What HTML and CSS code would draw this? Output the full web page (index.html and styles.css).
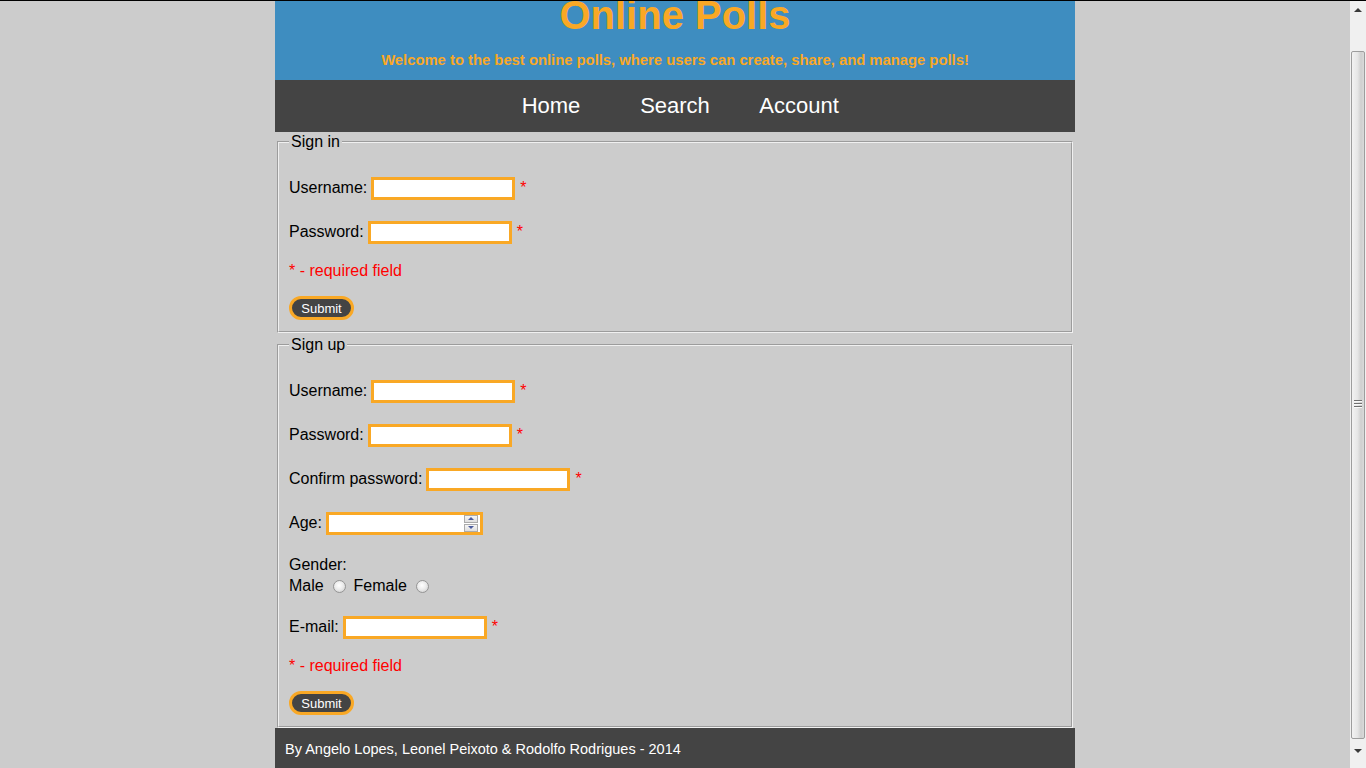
FILE: index.html
```html
<!DOCTYPE html>
<html lang="en">
<head>
<meta charset="utf-8">
<title>Online Polls</title>
<link rel="stylesheet" href="styles.css">
</head>
<body>
<div class="topline"></div>
<div class="viewport">
  <div class="page">
    <div class="wrap">
      <header class="header">
        <h1 class="title">Online Polls</h1>
        <p class="subtitle">Welcome to the best online polls, where users can create, share, and manage polls!</p>
      </header>
      <nav class="nav">
        <ul class="menu">
          <li><a href="#">Home</a></li>
          <li><a href="#">Search</a></li>
          <li><a href="#">Account</a></li>
        </ul>
      </nav>
      <main class="main">
        <form class="form">
          <fieldset class="box box-first">
            <legend>Sign in</legend>
            <div class="row"><label>Username:</label><input class="field" type="text"><span class="star">*</span></div>
            <div class="row"><label>Password:</label><input class="field" type="password"><span class="star">*</span></div>
            <p class="note">* - required field</p>
            <div class="actions"><button class="submit" type="button">Submit</button></div>
          </fieldset>
        </form>
        <form class="form">
          <fieldset class="box box-second">
            <legend>Sign up</legend>
            <div class="row"><label>Username:</label><input class="field" type="text"><span class="star">*</span></div>
            <div class="row"><label>Password:</label><input class="field" type="password"><span class="star">*</span></div>
            <div class="row"><label>Confirm password:</label><input class="field" type="password"><span class="star">*</span></div>
            <div class="row"><label>Age:</label>
              <span class="num"><input class="num-input" type="text"><span class="spin"><span class="spin-btn spin-up"></span><span class="spin-btn spin-down"></span></span></span>
            </div>
            <div class="gender">
              <div class="gender-label">Gender:</div>
              <div class="gender-opts">Male <input class="radio" type="radio" name="g"> Female <input class="radio" type="radio" name="g"></div>
            </div>
            <div class="row"><label>E-mail:</label><input class="field" type="text"><span class="star">*</span></div>
            <p class="note">* - required field</p>
            <div class="actions"><button class="submit" type="button">Submit</button></div>
          </fieldset>
        </form>
      </main>
      <footer class="footer">By Angelo Lopes, Leonel Peixoto &amp; Rodolfo Rodrigues - 2014</footer>
    </div>
  </div>
  <div class="scrollbar">
    <div class="sb-btn sb-up"></div>
    <div class="sb-track"><div class="sb-thumb"><span class="grip"></span></div></div>
    <div class="sb-btn sb-down"></div>
  </div>
</div>
</body>
</html>
```

FILE: styles.css
```css
html, body {
  margin: 0;
  height: 100%;
  overflow: hidden;
}
body {
  font-family: "Liberation Sans", Arial, sans-serif;
  background: #cccccc;
  color: #000;
  display: flex;
  flex-direction: column;
}
.topline {
  height: 1px;
  background: #000;
  flex: none;
}
.viewport {
  flex: 1;
  display: flex;
  min-height: 0;
}
.page {
  flex: 1;
  background: #cccccc;
  overflow: hidden;
}
.wrap {
  width: 800px;
  margin: 0 auto;
}
.header {
  background: #3e8dc0;
  height: 79px;
  text-align: center;
  overflow: hidden;
}
.title {
  margin: -9px 0 0;
  font-size: 40px;
  line-height: 46px;
  font-weight: bold;
  color: #f9a825;
}
.subtitle {
  margin: 14px 0 0;
  font-size: 14.8px;
  line-height: 16px;
  font-weight: bold;
  color: #f9a825;
}
.nav {
  background: #444444;
  height: 52px;
}
.menu {
  list-style: none;
  margin: 0;
  padding: 0;
  display: flex;
  justify-content: center;
}
.menu li {
  width: 124px;
  text-align: center;
  font-size: 22px;
  line-height: 52px;
}
.menu a {
  color: #fff;
  text-decoration: none;
}
.form {
  margin: 0;
}
.box {
  margin: 1px 2px 0;
  padding: 22px 10px 10px;
  border: 2px groove #f0f0f0;
  min-width: 0;
}
.box-second {
  margin-top: 3px;
}
.box legend {
  padding: 0 2px;
  font-size: 16px;
  line-height: 18px;
}
.row {
  box-sizing: border-box;
  display: flex;
  align-items: center;
  gap: 4px;
  height: 28px;
  padding-top: 2px;
  margin-bottom: 16px;
  font-size: 16px;
  line-height: 18px;
}
.field {
  box-sizing: border-box;
  width: 144px;
  height: 23px;
  border: 3px solid #f9a825;
  padding: 1px 2px;
  background: #fff;
  outline: none;
  margin: 0;
  font-size: 13px;
}
.star {
  color: #ff0000;
  margin-left: 1px;
}
.note {
  margin: 0 0 16px;
  padding-top: 1px;
  height: 17px;
  color: #ff0000;
  font-size: 16px;
  line-height: 18px;
}
.actions {
  height: 26px;
  display: flex;
  align-items: center;
}
.submit {
  box-sizing: border-box;
  width: 65px;
  height: 24px;
  border: 3px solid #f9a825;
  border-radius: 12px;
  background: #444444;
  color: #fff;
  font-family: "Liberation Sans", Arial, sans-serif;
  font-size: 13px;
  padding: 0;
  margin: 0;
}
.num {
  box-sizing: border-box;
  width: 157px;
  height: 23px;
  border: 3px solid #f9a825;
  background: #fff;
  display: flex;
  align-items: stretch;
  padding-right: 2px;
}
.num-input {
  flex: 1;
  min-width: 0;
  border: none;
  outline: none;
  padding: 0 2px;
  margin: 0;
  background: transparent;
}
.spin {
  width: 14px;
  display: flex;
  flex-direction: column;
  justify-content: space-between;
}
.spin-btn {
  box-sizing: border-box;
  height: 8px;
  border: 1px solid #ababab;
  background: linear-gradient(#f6f6f6, #dedede);
  display: flex;
  align-items: center;
  justify-content: center;
}
.spin-up::before {
  content: "";
  border-left: 3px solid transparent;
  border-right: 3px solid transparent;
  border-bottom: 3px solid #4b5c9e;
}
.spin-down::before {
  content: "";
  border-left: 3px solid transparent;
  border-right: 3px solid transparent;
  border-top: 3px solid #4b5c9e;
}
.gender {
  box-sizing: border-box;
  height: 44px;
  padding-top: 4px;
  margin-bottom: 16px;
  font-size: 16px;
}
.gender-label {
  line-height: 18px;
}
.gender-opts {
  margin-top: 1px;
  line-height: 21px;
  height: 21px;
}
.radio {
  -webkit-appearance: none;
  appearance: none;
  box-sizing: border-box;
  width: 13px;
  height: 13px;
  margin: 0 3px 0 5px;
  border: 1px solid #959595;
  border-radius: 50%;
  background: radial-gradient(circle at 45% 40%, #ffffff 0%, #ececec 45%, #c9c9c9 100%);
  vertical-align: middle;
}
.footer {
  background: #444444;
  color: #fff;
  font-size: 14.5px;
  line-height: 42px;
  height: 41px;
  padding-left: 10px;
  overflow: hidden;
}
.scrollbar {
  width: 16px;
  flex: none;
  background: #f0f0f0;
  display: flex;
  flex-direction: column;
}
.sb-btn {
  flex: none;
  display: flex;
  justify-content: center;
}
.sb-up {
  height: 17px;
  align-items: center;
}
.sb-down {
  height: 27px;
  align-items: flex-start;
  padding-top: 8px;
  box-sizing: border-box;
}
.sb-up::before {
  content: "";
  border-left: 4px solid transparent;
  border-right: 4px solid transparent;
  border-bottom: 4px solid #3a3a3a;
}
.sb-down::before {
  content: "";
  border-left: 4px solid transparent;
  border-right: 4px solid transparent;
  border-top: 4px solid #3a3a3a;
}
.sb-track {
  flex: 1;
  min-height: 0;
}
.sb-thumb {
  box-sizing: border-box;
  margin: 33px 1px 0;
  height: 688px;
  border: 1px solid #9d9d9d;
  border-radius: 2px;
  background: linear-gradient(90deg, #f2f2f2 0%, #e6e6e6 45%, #cfcfcf 75%, #dadada 100%);
  display: flex;
  align-items: center;
  justify-content: center;
}
.grip {
  width: 8px;
  height: 8px;
  margin-top: 18px;
  background: repeating-linear-gradient(#707070 0 1px, #fafafa 1px 2px, transparent 2px 3px);
}
```
